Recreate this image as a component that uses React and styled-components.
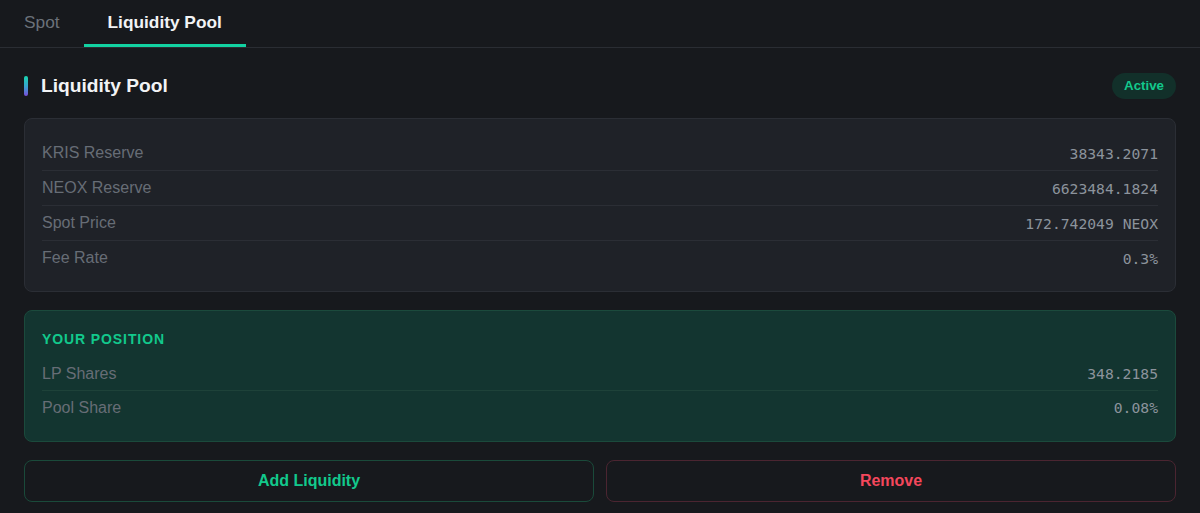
import React from 'react';
import styled, { createGlobalStyle } from 'styled-components';

const GlobalStyle = createGlobalStyle`
  html, body {
    margin: 0;
    padding: 0;
    background: #17191d;
    font-family: "Liberation Sans", Arial, sans-serif;
  }
`;

const Page = styled.div`
  width: 1200px;
  min-height: 513px;
  background: #17191d;
`;

const TabBar = styled.div`
  display: flex;
  border-bottom: 1px solid #2a2d33;
  height: 47px;
`;

const Tab = styled.div`
  padding: 12px 24px 0;
  font-size: 17.3px;
  line-height: 20px;
  font-weight: ${p => (p.active ? 700 : 400)};
  color: ${p => (p.active ? '#f2f3f5' : '#6b717a')};
  border-bottom: 3px solid ${p => (p.active ? '#12d2a2' : 'transparent')};
  box-sizing: border-box;
  height: 47px;
`;

const Content = styled.div`
  padding: 25px 24px 0;
  display: flex;
  flex-direction: column;
  gap: 18px;
`;

const Header = styled.div`
  display: flex;
  align-items: center;
  justify-content: space-between;
  height: 26px;
  margin-bottom: 1px;
`;

const TitleGroup = styled.div`
  display: flex;
  align-items: center;
  gap: 13px;
`;

const AccentBar = styled.span`
  width: 4px;
  height: 20px;
  border-radius: 2px;
  background: linear-gradient(180deg, #18d6b0 0%, #3aa0d0 55%, #7b4bdc 100%);
`;

const Title = styled.h2`
  margin: 0;
  font-size: 19.2px;
  font-weight: 700;
  color: #f2f3f5;
`;

const Badge = styled.span`
  padding: 0 12px;
  height: 26px;
  line-height: 26px;
  border-radius: 13px;
  background: #12302a;
  color: #12c98c;
  font-size: 13.3px;
  font-weight: 700;
`;

const Card = styled.div`
  border-radius: 8px;
  padding: ${p => (p.tone === 'green' ? '18px 17px 17px' : '17px 17px 16px')};
  background: ${p => (p.tone === 'green' ? '#133530' : '#1f2228')};
  border: 1px solid ${p => (p.tone === 'green' ? '#1b4a3c' : '#2b2e35')};
`;

const SectionLabel = styled.div`
  font-size: 14px;
  font-weight: 700;
  letter-spacing: 0.9px;
  color: #12c98c;
  line-height: 20px;
  margin-bottom: 8px;
`;

const Row = styled.div`
  display: flex;
  justify-content: space-between;
  align-items: center;
  height: ${p => (p.tone === 'green' ? '33px' : '34px')};
  border-bottom: 1px solid ${p => (p.tone === 'green' ? '#1e4239' : '#2b2e35')};
  &:last-child {
    border-bottom: none;
  }
`;

const Label = styled.span`
  font-size: 16px;
  color: #676d76;
`;

const Value = styled.span`
  font-family: "DejaVu Sans Mono", "Liberation Mono", monospace;
  font-size: 14.7px;
  color: #8c939c;
`;

const Actions = styled.div`
  display: grid;
  grid-template-columns: 1fr 1fr;
  gap: 12px;
`;

const Button = styled.button`
  height: 42px;
  border-radius: 8px;
  background: transparent;
  font-family: "Liberation Sans", Arial, sans-serif;
  font-size: 16px;
  font-weight: 700;
  cursor: pointer;
  border: 1px solid ${p => (p.variant === 'danger' ? '#4b2531' : '#1a4a3a')};
  color: ${p => (p.variant === 'danger' ? '#f4475c' : '#12c98c')};
`;

const poolRows = [
  ['KRIS Reserve', '38343.2071'],
  ['NEOX Reserve', '6623484.1824'],
  ['Spot Price', '172.742049 NEOX'],
  ['Fee Rate', '0.3%'],
];

const positionRows = [
  ['LP Shares', '348.2185'],
  ['Pool Share', '0.08%'],
];

export default function App() {
  return (
    <Page>
      <GlobalStyle />
      <TabBar>
        <Tab>Spot</Tab>
        <Tab active>Liquidity Pool</Tab>
      </TabBar>
      <Content>
        <Header>
          <TitleGroup>
            <AccentBar />
            <Title>Liquidity Pool</Title>
          </TitleGroup>
          <Badge>Active</Badge>
        </Header>

        <Card>
          {poolRows.map(([label, value]) => (
            <Row key={label}>
              <Label>{label}</Label>
              <Value>{value}</Value>
            </Row>
          ))}
        </Card>

        <Card tone="green">
          <SectionLabel>YOUR POSITION</SectionLabel>
          {positionRows.map(([label, value]) => (
            <Row key={label} tone="green">
              <Label>{label}</Label>
              <Value>{value}</Value>
            </Row>
          ))}
        </Card>

        <Actions>
          <Button>Add Liquidity</Button>
          <Button variant="danger">Remove</Button>
        </Actions>
      </Content>
    </Page>
  );
}
